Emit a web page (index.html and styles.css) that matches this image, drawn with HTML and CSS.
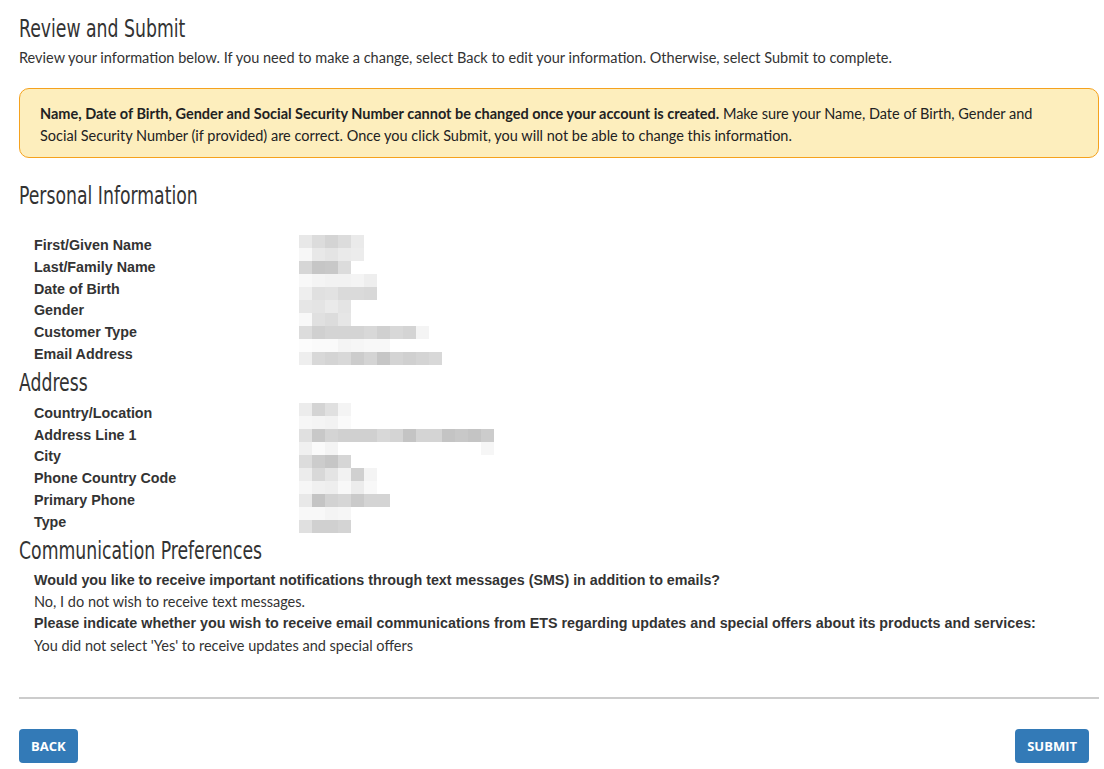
FILE: index.html
```html
<!DOCTYPE html>
<html lang="en">
<head>
    <meta charset="UTF-8">
    <meta name="viewport" content="width=device-width, initial-scale=1.0">
    <title>Review and Submit</title>
    <link rel="stylesheet" href="styles.css">
</head>
<body>
    <div id="page">
        <h1 class="title">Review and Submit</h1>
        <p class="intro">Review your information below. If you need to make a change, select Back to edit your information. Otherwise, select Submit to complete.</p>

        <div class="notice">
            <strong>Name, Date of Birth, Gender and Social Security Number cannot be changed once your account is created.</strong> Make sure your Name, Date of Birth, Gender and Social Security Number (if provided) are correct. Once you click Submit, you will not be able to change this information.
        </div>

        <h2 class="section-title first">Personal Information</h2>
        <div class="fields personal">
            <ul class="labels">
                <li>First/Given Name</li>
                <li>Last/Family Name</li>
                <li>Date of Birth</li>
                <li>Gender</li>
                <li>Customer Type</li>
                <li>Email Address</li>
            </ul>
            <div class="mosaic" id="personal-values"></div>
        </div>

        <h2 class="section-title">Address</h2>
        <div class="fields">
            <ul class="labels">
                <li>Country/Location</li>
                <li>Address Line 1</li>
                <li>City</li>
                <li>Phone Country Code</li>
                <li>Primary Phone</li>
                <li>Type</li>
            </ul>
            <div class="mosaic" id="address-values"></div>
        </div>

        <h2 class="section-title">Communication Preferences</h2>
        <div class="prefs">
            <p class="question">Would you like to receive important notifications through text messages (SMS) in addition to emails?</p>
            <p class="answer">No, I do not wish to receive text messages.</p>
            <p class="question">Please indicate whether you wish to receive email communications from ETS regarding updates and special offers about its products and services:</p>
            <p class="answer">You did not select 'Yes' to receive updates and special offers</p>
        </div>

        <hr class="divider">

        <div class="actions">
            <button class="btn">Back</button>
            <button class="btn submit">Submit</button>
        </div>
    </div>

    <script>
        // blurred (pixelated) values, one row of cells per 13px
        const personal = [
            ['e8','dc','d4','dc','ea'],
            ['f7','e8','e4','ea','ec'],
            ['d6','c6','c8','dc'],
            ['f8','f4','f2','f2','f4','ee'],
            ['ee','e0','e2','da','da','d8'],
            ['e6','e4','ea','e4'],
            ['f8','e0','dc','e6'],
            ['dc','d0','d4','d4','d4','d8','d0','d8','d4','f4'],
            ['fc','fa','fa','f4','f6','f8','f8'],
            ['ee','d8','d4','d8','cc','d4','c6','d4','d0','d4','d8']
        ];
        const address = [
            ['ec','d4','e0','f4'],
            ['f6','f4','f2','fa'],
            ['e0','c8','d4','d0','d0','d0','d8','d4','c4','d4','d4','c4','c8','c4','cc'],
            ['f0','fa','f4','ff','ff','ff','ff','ff','ff','ff','ff','ff','ff','ff','f6'],
            ['dc','cc','c6','d6'],
            ['ec','d8','e4','f2','d0','f4'],
            ['f6','f0','ee','f8','ec','f8'],
            ['e8','c4','d2','d6','ca','d4','d4'],
            ['f8','f8','f4','f6'],
            ['e0','d0','d0','d4']
        ];

        function buildMosaic(id, rows) {
            const box = document.getElementById(id);
            rows.forEach(row => {
                const line = document.createElement('div');
                line.className = 'mosaic-row';
                row.forEach(shade => {
                    const cell = document.createElement('span');
                    cell.className = 'cell';
                    cell.style.backgroundColor = '#' + shade + shade + shade;
                    line.appendChild(cell);
                });
                box.appendChild(line);
            });
        }

        buildMosaic('personal-values', personal);
        buildMosaic('address-values', address);
    </script>
</body>
</html>
```

FILE: styles.css
```css
body {
    margin: 0;
    padding: 0;
    background-color: #fff;
    color: #333;
    font-family: Lato, "Liberation Sans", sans-serif;
    font-size: 14.5px;
}

#page {
    padding: 12px 5px 0 19px;
}

.title,
.section-title {
    font-family: "DejaVu Sans Condensed", "Liberation Sans", sans-serif;
    font-weight: normal;
    font-size: 24px;
    line-height: 30px;
    padding-top: 2px;
    color: #333;
    margin: 0;
    transform: scaleX(0.8);
    transform-origin: left center;
}

.intro {
    margin: 3px 0 0;
    line-height: 22px;
}

.notice {
    margin-top: 19px;
    padding: 14px 45px 10px 20px;
    background-color: #fdeebd;
    border: 1px solid #f5a21e;
    border-radius: 10px;
    line-height: 22px;
    color: #222;
}

.notice strong {
    font-weight: bold;
}

.section-title.first {
    margin-top: 21px;
}

.fields {
    display: flex;
    padding-left: 15px;
    margin-top: 5px;
}

.fields.personal {
    margin-top: 24px;
}

.labels {
    list-style: none;
    margin: 0;
    padding: 0;
    width: 265px;
}

.labels li,
.question {
    font-family: "Liberation Sans", Arial, sans-serif;
    font-weight: bold;
    font-size: 14.3px;
    line-height: 21.8px;
    color: #333;
}

.mosaic {
    display: flex;
    flex-direction: column;
}

.mosaic-row {
    display: flex;
    height: 13px;
}

.cell {
    width: 13px;
    height: 13px;
}

.prefs {
    padding-left: 15px;
    margin-top: 4px;
}

.prefs p {
    margin: 0;
    line-height: 21.8px;
}

.divider {
    margin: 40px 0 0;
    border: none;
    height: 2px;
    background-color: #ccc;
}

.actions {
    display: flex;
    justify-content: space-between;
    margin-top: 30px;
    padding-right: 10px;
}

.btn {
    height: 34px;
    padding: 0 12px;
    border: none;
    border-radius: 4px;
    background-color: #337ab7;
    color: #fff;
    font-family: "Open Sans", sans-serif;
    font-weight: bold;
    font-size: 13px;
    text-transform: uppercase;
    cursor: pointer;
}
```
